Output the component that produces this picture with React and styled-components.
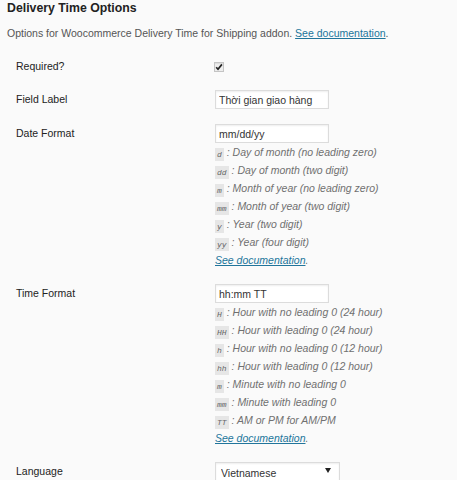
import React from "react";
import styled, { createGlobalStyle } from "styled-components";

const GlobalStyle = createGlobalStyle`
  html, body { margin: 0; padding: 0; }
  body {
    background: #fafafa;
    font-family: "Liberation Sans", Arial, sans-serif;
    color: #222;
  }
`;

const Page = styled.div`
  padding: 0 0 0 7px;
  height: 480px;
  overflow: hidden;
`;

const Title = styled.h3`
  margin: 0;
  font-size: 12.3px;
  font-weight: bold;
  line-height: 16px;
  color: #222;
`;

const Intro = styled.p`
  margin: 9px 0 0;
  font-size: 10.5px;
  line-height: 16px;
  color: #555;
`;

const Link = styled.a`
  color: #21759b;
  text-decoration: underline;
`;

const Form = styled.div`
  margin-top: 16px;
  padding-left: 9px;
  display: flex;
  flex-direction: column;
  gap: 15px;
`;

const Row = styled.div`
  display: grid;
  grid-template-columns: 199px 1fr;
  align-items: start;
`;

const Label = styled.div`
  font-size: 10.5px;
  line-height: 18px;
  color: #222;
`;

const Field = styled.div`
  display: flex;
  flex-direction: column;
  align-items: flex-start;
  min-height: ${(p) => p.$minHeight || 0}px;
`;

const CheckBox = styled.span`
  display: inline-flex;
  align-items: center;
  justify-content: center;
  width: 10px;
  height: 10px;
  margin: 5px 0 0 -1px;
  box-sizing: border-box;
  border: 1px solid #c4c4c4;
  background: #eeeeee;
  box-shadow: inset 0 1px 1px rgba(0, 0, 0, 0.08);
`;

const TextInput = styled.input`
  width: 114px;
  height: 19px;
  box-sizing: border-box;
  border: 1px solid #dcdcdc;
  border-radius: 0;
  box-shadow: inset 0 1px 2px rgba(0, 0, 0, 0.07);
  background: #fff;
  padding: 0 3px;
  margin: 0;
  font-family: "Liberation Sans", Arial, sans-serif;
  font-size: 10.5px;
  color: #333;
  outline: none;
`;

const Help = styled.div`
  font-size: 10.5px;
  line-height: 18px;
  font-style: italic;
  color: #707070;
  white-space: nowrap;
`;

const Code = styled.code`
  display: inline-block;
  font-family: "Liberation Mono", "DejaVu Sans Mono", monospace;
  font-size: 8px;
  line-height: 13px;
  font-style: italic;
  background: #e6e6e6;
  color: #666;
  padding: 0 2px;
  vertical-align: -1px;
`;

const HelpLink = styled(Link)`
  font-style: italic;
`;

const SelectWrap = styled.div`
  position: relative;
  width: 125px;
`;

const Select = styled.select`
  appearance: none;
  -webkit-appearance: none;
  width: 125px;
  height: 21px;
  box-sizing: border-box;
  border: 1px solid #dcdcdc;
  border-radius: 0;
  box-shadow: inset 0 1px 2px rgba(0, 0, 0, 0.07);
  background: #fff;
  padding: 0 5px;
  margin: 0;
  font-family: "Liberation Sans", Arial, sans-serif;
  font-size: 10.5px;
  color: #333;
  outline: none;
`;

const Arrow = styled.span`
  position: absolute;
  right: 9px;
  top: 6px;
  width: 0;
  height: 0;
  border-left: 3px solid transparent;
  border-right: 3px solid transparent;
  border-top: 5px solid #222;
  pointer-events: none;
`;

const dateHelp = [
  ["d", "Day of month (no leading zero)"],
  ["dd", "Day of month (two digit)"],
  ["m", "Month of year (no leading zero)"],
  ["mm", "Month of year (two digit)"],
  ["y", "Year (two digit)"],
  ["yy", "Year (four digit)"],
];

const timeHelp = [
  ["H", "Hour with no leading 0 (24 hour)"],
  ["HH", "Hour with leading 0 (24 hour)"],
  ["h", "Hour with no leading 0 (12 hour)"],
  ["hh", "Hour with leading 0 (12 hour)"],
  ["m", "Minute with no leading 0"],
  ["mm", "Minute with leading 0"],
  ["TT", "AM or PM for AM/PM"],
];

function HelpList({ items }) {
  return (
    <>
      {items.map(([code, text]) => (
        <Help key={code + text}>
          <Code>{code}</Code> : {text}
        </Help>
      ))}
      <Help>
        <HelpLink href="#">See documentation</HelpLink>.
      </Help>
    </>
  );
}

export default function App() {
  return (
    <Page>
      <GlobalStyle />
      <Title>Delivery Time Options</Title>
      <Intro>
        Options for Woocommerce Delivery Time for Shipping addon.{" "}
        <Link href="#">See documentation</Link>.
      </Intro>
      <Form>
        <Row>
          <Label>Required?</Label>
          <Field $minHeight={17}>
            <CheckBox>
              <svg width="8" height="8" viewBox="0 0 8 8">
                <path
                  d="M1.2 4.2 L3 6.2 L6.9 1.4"
                  fill="none"
                  stroke="#222"
                  strokeWidth="1.7"
                />
              </svg>
            </CheckBox>
          </Field>
        </Row>
        <Row>
          <Label>Field Label</Label>
          <Field>
            <TextInput defaultValue="Thời gian giao hàng" />
          </Field>
        </Row>
        <Row>
          <Label>Date Format</Label>
          <Field>
            <TextInput defaultValue="mm/dd/yy" />
            <HelpList items={dateHelp} />
          </Field>
        </Row>
        <Row>
          <Label>Time Format</Label>
          <Field>
            <TextInput defaultValue="hh:mm TT" />
            <HelpList items={timeHelp} />
          </Field>
        </Row>
        <Row>
          <Label>Language</Label>
          <Field>
            <SelectWrap>
              <Select defaultValue="vi">
                <option value="vi">Vietnamese</option>
                <option value="en">English</option>
              </Select>
              <Arrow />
            </SelectWrap>
          </Field>
        </Row>
      </Form>
    </Page>
  );
}
